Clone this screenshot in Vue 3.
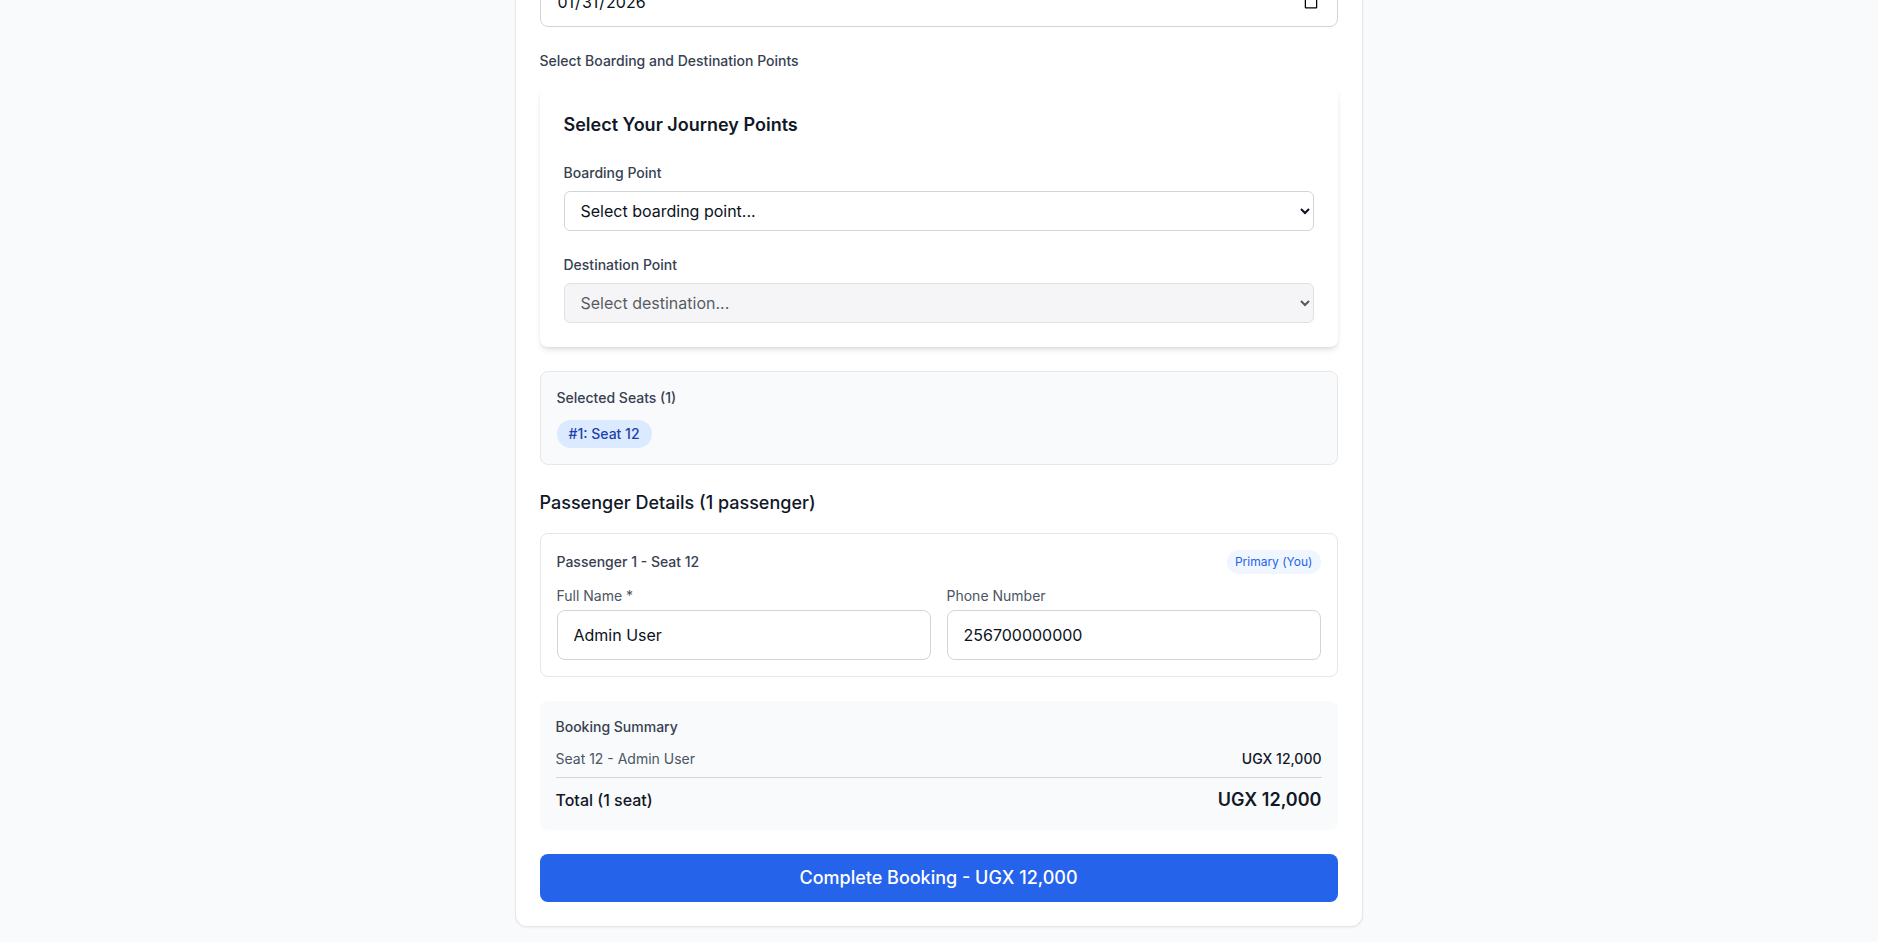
<script setup>
const passenger = { name: 'Admin User', phone: '256700000000' }
</script>

<template>
  <div class="page">
    <div class="panel">
      <input class="field" type="date" value="2026-01-31" />
      <div class="section-label">Select Boarding and Destination Points</div>

      <div class="journey">
        <h3 class="journey-title">Select Your Journey Points</h3>
        <label class="select-label">Boarding Point</label>
        <select class="select">
          <option>Select boarding point...</option>
        </select>
        <label class="select-label second">Destination Point</label>
        <select class="select" disabled>
          <option>Select destination...</option>
        </select>
      </div>

      <div class="seats">
        <div class="seats-title">Selected Seats (1)</div>
        <div class="chips"><span class="chip">#1: Seat 12</span></div>
      </div>

      <h3 class="passengers-title">Passenger Details (1 passenger)</h3>

      <div class="passenger">
        <div class="passenger-head">
          <span class="passenger-name">Passenger 1 - Seat 12</span>
          <span class="badge">Primary (You)</span>
        </div>
        <div class="passenger-grid">
          <div>
            <label class="small-label">Full Name *</label>
            <input class="field" type="text" :value="passenger.name" />
          </div>
          <div>
            <label class="small-label">Phone Number</label>
            <input class="field" type="tel" :value="passenger.phone" />
          </div>
        </div>
      </div>

      <div class="summary">
        <div class="summary-title">Booking Summary</div>
        <div class="summary-row">
          <span class="summary-seat">Seat 12 - Admin User</span>
          <span class="summary-price">UGX 12,000</span>
        </div>
        <div class="summary-total">
          <span class="total-label">Total (1 seat)</span>
          <span class="total-amount">UGX 12,000</span>
        </div>
      </div>

      <button class="submit" type="button">Complete Booking - UGX 12,000</button>
    </div>
  </div>
</template>

<style>
html, body {
  margin: 0;
  overflow: hidden;
  background: #f9fafb;
}
</style>

<style scoped>
* {
  box-sizing: border-box;
}
.page {
  height: 100vh;
  overflow: hidden;
  display: flex;
  flex-direction: column;
  justify-content: flex-end;
  align-items: center;
  padding-right: 1px;
  padding-bottom: 15px;
  background: #f9fafb;
  font-family: Inter, "Liberation Sans", sans-serif;
  color: #111827;
}
.panel {
  width: 848px;
  flex-shrink: 0;
  padding: 0 24px 24px;
  background: #fff;
  border: 1px solid #e5e7eb;
  border-top: 0;
  border-radius: 12px;
  box-shadow: 0 1px 2px rgba(0, 0, 0, 0.05);
}
.field {
  display: block;
  width: 100%;
  height: 50px;
  padding: 12px 16px;
  border: 1px solid #d1d5db;
  border-radius: 8px;
  background: #fff;
  color: #0b1220;
  font: 400 16px/24px Inter, "Liberation Sans", sans-serif;
  outline: none;
}
.section-label {
  margin-top: 24px;
  font-size: 14px;
  line-height: 20px;
  font-weight: 500;
  color: #374151;
}
.journey {
  margin-top: 16px;
  padding: 24px;
  background: #fff;
  border-radius: 8px;
  box-shadow: 0 4px 6px -1px rgba(0, 0, 0, 0.1), 0 2px 4px -2px rgba(0, 0, 0, 0.1);
}
.journey-title {
  margin: 0 0 24px;
  font-size: 18px;
  line-height: 28px;
  font-weight: 600;
  color: #111827;
}
.select-label {
  display: block;
  margin-bottom: 8px;
  font-size: 14px;
  line-height: 20px;
  font-weight: 500;
  color: #374151;
}
.select-label.second {
  margin-top: 24px;
}
.select {
  display: block;
  width: 100%;
  height: 40px;
  padding: 8px 12px;
  border: 1px solid #d1d5db;
  border-radius: 6px;
  background: #fff;
  color: #0b1220;
  font: 400 16px/24px Inter, "Liberation Sans", sans-serif;
  outline: none;
}
.select:disabled {
  background: #f2f2f5;
}
.seats {
  margin-top: 24px;
  padding: 16px;
  background: #f9fafb;
  border: 1px solid #e5e7eb;
  border-radius: 8px;
}
.seats-title {
  margin-bottom: 12px;
  font-size: 14px;
  line-height: 20px;
  font-weight: 500;
  color: #374151;
}
.chips {
  display: flex;
  flex-wrap: wrap;
  gap: 8px;
}
.chip {
  padding: 4px 12px;
  border-radius: 9999px;
  background: #dbeafe;
  color: #1e40af;
  font-size: 14px;
  line-height: 20px;
  font-weight: 500;
}
.passengers-title {
  margin: 24px 0 16px;
  font-size: 18px;
  line-height: 28px;
  font-weight: 500;
  color: #111827;
}
.passenger {
  padding: 16px;
  border: 1px solid #e5e7eb;
  border-radius: 8px;
  background: #fff;
}
.passenger-head {
  display: flex;
  justify-content: space-between;
  align-items: center;
  margin-bottom: 12px;
}
.passenger-name {
  font-size: 14px;
  line-height: 20px;
  font-weight: 500;
  color: #374151;
}
.badge {
  padding: 4px 8px;
  border-radius: 9999px;
  background: #eff6ff;
  color: #2563eb;
  font-size: 12px;
  line-height: 16px;
}
.passenger-grid {
  display: grid;
  grid-template-columns: 1fr 1fr;
  gap: 16px;
}
.small-label {
  display: block;
  margin-bottom: 4px;
  font-size: 14px;
  line-height: 20px;
  color: #4b5563;
}
.summary {
  margin-top: 24px;
  padding: 16px;
  background: #f9fafb;
  border-radius: 8px;
}
.summary-title {
  margin-bottom: 12px;
  font-size: 14px;
  line-height: 20px;
  font-weight: 500;
  color: #374151;
}
.summary-row {
  display: flex;
  justify-content: space-between;
  font-size: 14px;
  line-height: 20px;
  margin-bottom: 8px;
}
.summary-seat {
  color: #4b5563;
}
.summary-price {
  font-weight: 500;
  color: #111827;
}
.summary-total {
  display: flex;
  justify-content: space-between;
  align-items: center;
  padding-top: 8px;
  border-top: 1px solid #d1d5db;
}
.total-label {
  font-size: 16px;
  line-height: 24px;
  font-weight: 500;
}
.total-amount {
  font-size: 18px;
  line-height: 28px;
  font-weight: 600;
}
.submit {
  display: block;
  width: 100%;
  height: 48px;
  margin-top: 24px;
  border: 0;
  border-radius: 8px;
  background: #2563eb;
  color: #fff;
  font: 500 18px/28px Inter, "Liberation Sans", sans-serif;
}
</style>
